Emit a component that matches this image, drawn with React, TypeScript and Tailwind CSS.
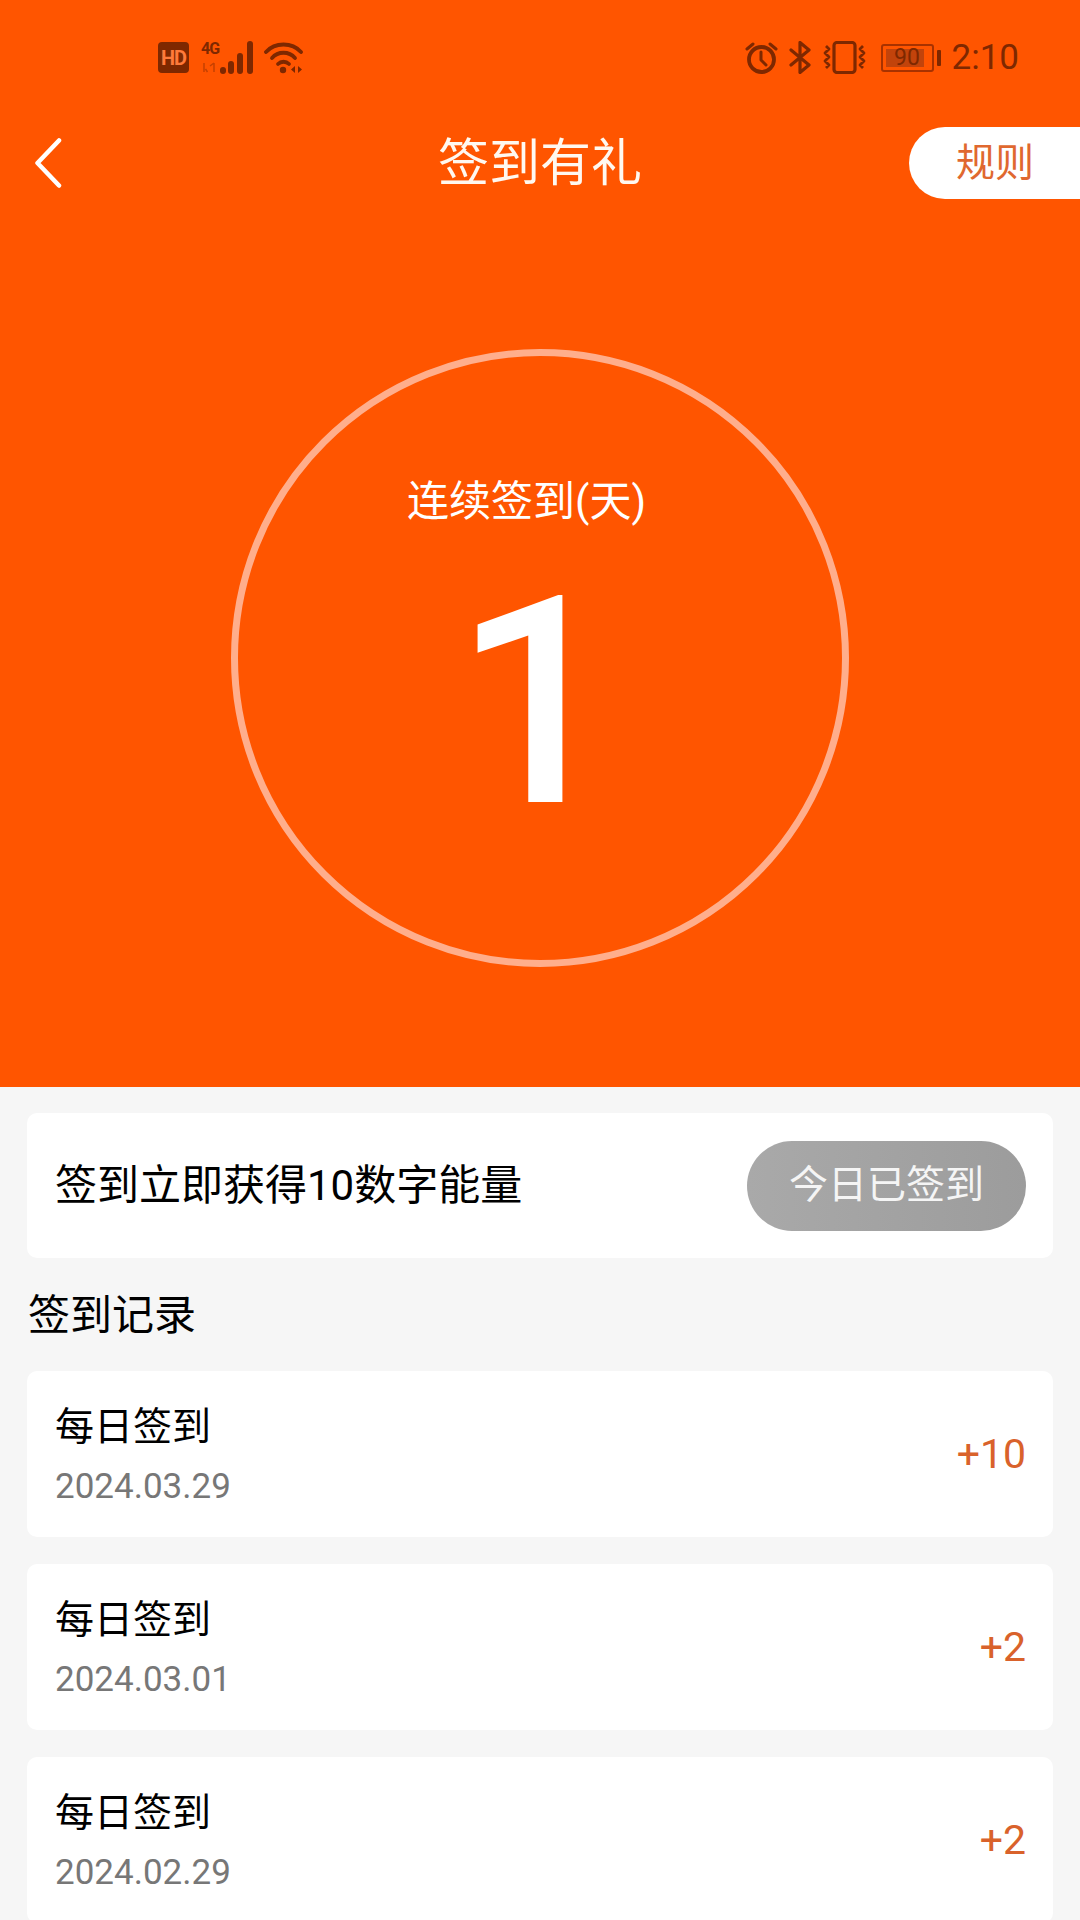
import React from 'react';

const records = [
  { title: '每日签到', date: '2024.03.29', points: '+10' },
  { title: '每日签到', date: '2024.03.01', points: '+2' },
  { title: '每日签到', date: '2024.02.29', points: '+2' },
];

const ICON = '#7e2800';

function StatusBar() {
  return (
    <div className="flex h-[33px] items-center justify-between pl-[158px] pr-[61px] text-[#7e2800]">
      <div className="flex items-center">
        <div className="flex h-[31px] w-[31px] items-center justify-center rounded-[4px] bg-[#7e2800] text-[20px] font-bold leading-none tracking-[-1px] text-[#ff7a3a]">
          HD
        </div>
        <div className="relative ml-[12px] h-[33px] w-[53px]">
          <span className="absolute left-0 top-0 text-[16px] font-bold leading-[16px] tracking-[-1px]">4G</span>
          <svg className="absolute left-0 top-0" width="53" height="33" viewBox="0 0 53 33">
            <path d="M3 22v9M6.500 31l-2-3M13 31v-9M9 25l4-3" stroke={ICON} strokeWidth="1.500" fill="none" opacity="0.450" />
            <rect x="19" y="26" width="6" height="7" rx="3" fill={ICON} />
            <rect x="27" y="20" width="6" height="13" rx="3" fill={ICON} />
            <rect x="36" y="12" width="6" height="21" rx="3" fill={ICON} />
            <rect x="46" y="0" width="6" height="33" rx="3" fill={ICON} />
          </svg>
        </div>
        <svg className="ml-[10px]" width="40" height="33" viewBox="0 0 40 33" fill="none">
          <path d="M2 11C11 1 28 1 37 11" stroke={ICON} strokeWidth="3.800" strokeLinecap="round" />
          <path d="M8 17C14 10 25 10 31 17" stroke={ICON} strokeWidth="3.800" strokeLinecap="round" />
          <path d="M14 23C17 20 22 20 25 23" stroke={ICON} strokeWidth="3.800" strokeLinecap="round" />
          <circle cx="19" cy="29" r="3.200" fill={ICON} />
          <path d="M31 25v7l-4-3.500zM34 25v7l4-3.500z" fill={ICON} />
        </svg>
      </div>
      <div className="flex items-center">
        <svg width="33" height="33" viewBox="0 0 33 33" fill="none">
          <circle cx="16.500" cy="18.500" r="12.500" stroke={ICON} strokeWidth="3.800" />
          <path d="M16 11v8l5 5" stroke={ICON} strokeWidth="3" strokeLinecap="round" strokeLinejoin="round" />
          <path d="M2 8l6-5M31 8l-6-5" stroke={ICON} strokeWidth="3" strokeLinecap="round" />
        </svg>
        <svg className="ml-[11px]" width="23" height="33" viewBox="0 0 23 33" fill="none">
          <path d="M2 9l18 15-9 7.500V1.500l9 7.500L2 24" stroke={ICON} strokeWidth="3.200" strokeLinejoin="round" strokeLinecap="round" />
        </svg>
        <svg className="ml-[11px]" width="43" height="33" viewBox="0 0 43 33" fill="none">
          <rect x="11" y="1.500" width="21" height="30" rx="3" stroke={ICON} strokeWidth="3.200" />
          <path d="M3 5l3 3-4 4 4 4-4 4 4 4-3 3M40 5l-3 3 4 4-4 4 4 4-4 4 3 3" stroke={ICON} strokeWidth="2.800" strokeLinejoin="round" />
        </svg>
        <div className="relative ml-[15px] flex h-[28px] w-[53px] items-center rounded-[3px] border-2 border-[#a83200] p-[3px]">
          <div className="h-full w-[38px] bg-[#c2430b]" />
          <span className="absolute inset-0 text-center text-[23px] leading-[24px]">90</span>
        </div>
        <div className="ml-[3px] h-[16px] w-[4px] rounded-[1px] bg-[#7e2800]" />
        <span className="ml-[11px] text-[35px] leading-none">2:10</span>
      </div>
    </div>
  );
}

export default function App() {
  return (
    <div className="h-[1920px] w-[1080px] overflow-hidden bg-[#f6f6f6] font-[Roboto,'Noto_Sans_CJK_SC',sans-serif] text-black">
      {/* Orange header */}
      <div className="h-[1087px] bg-[#ff5500] pt-[41px]">
        <StatusBar />

        <div className="mt-[53px] grid h-[72px] grid-cols-[1fr_auto_1fr] items-center">
          <div className="pl-[34px]">
            <svg width="28" height="50" viewBox="0 0 28 50" fill="none">
              <path d="M25 2.500L3.500 25L25 47.500" stroke="#fff" strokeWidth="4.500" strokeLinecap="round" strokeLinejoin="round" />
            </svg>
          </div>
          <div className="text-[51px] leading-none text-[#fff8f0]">签到有礼</div>
          <div className="flex justify-end">
            <div className="flex h-[72px] w-[171px] items-center rounded-l-[36px] bg-white pl-[47px] text-[39px] leading-none text-[#e0682f]">
              规则
            </div>
          </div>
        </div>

        {/* Streak ring */}
        <div className="mx-auto mt-[150px] flex h-[618px] w-[618px] flex-col items-center rounded-full border-[7px] border-[#ffae8c] pt-[121px] text-white">
          <div className="mr-[27px] text-[42px] leading-[50px]">连续签到(天)</div>
          <div className="mr-[8px] mt-[31px] text-[290px] font-medium leading-[290px]">1</div>
        </div>
      </div>

      <div className="px-[27px] pt-[26px]">
        <div className="flex h-[145px] items-center justify-between rounded-[10px] bg-white pl-[28px] pr-[27px]">
          <span className="text-[42px] leading-none">签到立即获得10数字能量</span>
          <div className="flex h-[90px] w-[279px] items-center justify-center rounded-full bg-gradient-to-r from-[#a9a9a9] to-[#9c9c9c] text-[39px] leading-none text-[#f5f5f5]">
            今日已签到
          </div>
        </div>

        <div className="flex h-[113px] items-center pl-[1px] pt-[2px] text-[42px] leading-none">签到记录</div>

        <div className="flex flex-col gap-[27px]">
          {records.map((r) => (
            <div key={r.date} className="flex h-[166px] items-center justify-between rounded-[10px] bg-white pl-[28px] pr-[27px]">
              <div>
                <div className="text-[39px] leading-[50px]">{r.title}</div>
                <div className="mt-[16px] text-[35px] leading-[38px] text-[#777777]">{r.date}</div>
              </div>
              <span className="text-[41px] leading-none text-[#d9622b]">{r.points}</span>
            </div>
          ))}
          <div className="h-[166px] rounded-[10px] bg-white" />
        </div>
      </div>
    </div>
  );
}
